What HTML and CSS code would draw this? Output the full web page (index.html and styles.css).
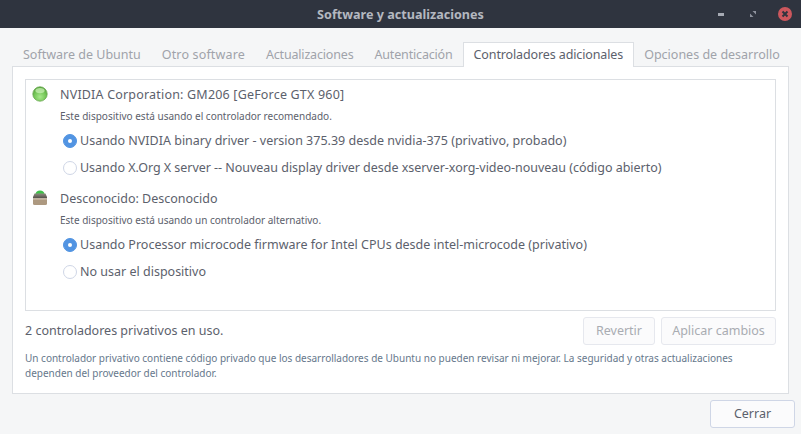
FILE: index.html
```html
<!DOCTYPE html>
<html lang="es">
<head>
<meta charset="utf-8">
<title>Software y actualizaciones</title>
<link rel="stylesheet" href="styles.css">
</head>
<body>
<div class="window">
  <header class="titlebar">
    <span class="title">Software y actualizaciones</span>
    <div class="controls">
      <svg class="ctl-min" width="6" height="3" viewBox="0 0 6 3"><rect x="0" y="0" width="6" height="3" fill="#a6aab3"/></svg>
      <svg class="ctl-max" width="6" height="6" viewBox="0 0 6 6"><path d="M2.5 0H6V3.5ZM0 2.5V6H3.5Z" fill="#8f939e"/></svg>
      <svg class="ctl-close" width="14" height="14" viewBox="0 0 14 14"><circle cx="7" cy="7" r="7" fill="#cc575d"/><path d="M4.5 4.5L9.5 9.5M9.5 4.5L4.5 9.5" stroke="#2f343f" stroke-width="2"/></svg>
    </div>
  </header>
  <main class="content">
    <nav class="tabs">
      <span class="tab">Software de Ubuntu</span>
      <span class="tab tab-otro">Otro software</span>
      <span class="tab tab-tight">Actualizaciones</span>
      <span class="tab tab-tight">Autenticación</span>
      <span class="tab active tab-ctrl">Controladores adicionales</span>
      <span class="tab">Opciones de desarrollo</span>
    </nav>
    <section class="panel">
      <div class="list">
        <div class="device">
          <div class="device-head">
            <svg class="dev-icon" width="16" height="16" viewBox="0 0 16 16">
              <defs><radialGradient id="g" cx="50%" cy="70%" r="60%"><stop offset="0" stop-color="#a6e88a"/><stop offset="0.7" stop-color="#72c455"/><stop offset="1" stop-color="#5aa83f"/></radialGradient></defs>
              <circle cx="8" cy="8" r="7.2" fill="url(#g)" stroke="#6aa850" stroke-width="0.8"/>
              <ellipse cx="8" cy="4.6" rx="4.6" ry="2.6" fill="#c8efb4" opacity="0.75"/>
            </svg>
            <span class="dev-name wide">NVIDIA Corporation: GM206 [GeForce GTX 960]</span>
          </div>
          <p class="dev-note">Este dispositivo está usando el controlador recomendado.</p>
          <label class="option"><span class="radio on"></span>Usando NVIDIA binary driver - version 375.39 desde nvidia-375 (privativo, probado)</label>
          <label class="option"><span class="radio"></span><span class="opt-tight">Usando X.Org X server -- Nouveau display driver desde xserver-xorg-video-nouveau (código abierto)</span></label>
        </div>
        <div class="device">
          <div class="device-head">
            <svg class="dev-icon" width="16" height="16" viewBox="0 0 16 16">
              <defs><linearGradient id="lid" x1="0" y1="0" x2="0" y2="1"><stop offset="0" stop-color="#8e8b80"/><stop offset="1" stop-color="#4f4c45"/></linearGradient></defs>
              <path d="M3.5 4Q4 0.5 8 0.5T12.5 4Z" fill="#3fc04a"/>
              <path d="M2.5 3.5H13.5L15 7V8.5H1V7Z" fill="url(#lid)"/>
              <path d="M1 8.5H15V13.5Q15 15 13.5 15H2.5Q1 15 1 13.5Z" fill="#ad9980"/>
              <rect x="1" y="8.5" width="14" height="1" fill="#d3c7b4"/>
            </svg>
            <span class="dev-name">Desconocido: Desconocido</span>
          </div>
          <p class="dev-note">Este dispositivo está usando un controlador alternativo.</p>
          <label class="option"><span class="radio on"></span>Usando Processor microcode firmware for Intel CPUs desde intel-microcode (privativo)</label>
          <label class="option"><span class="radio"></span>No usar el dispositivo</label>
        </div>
      </div>
      <div class="status-row">
        <span class="status">2 controladores privativos en uso.</span>
        <div class="actions">
          <button class="btn disabled revert" disabled>Revertir</button>
          <button class="btn disabled apply" disabled>Aplicar cambios</button>
        </div>
      </div>
      <p class="footnote">Un controlador privativo contiene código privado que los desarrolladores de Ubuntu no pueden revisar ni mejorar. La seguridad y otras actualizaciones dependen del proveedor del controlador.</p>
    </section>
    <div class="bottom"><button class="btn close">Cerrar</button></div>
  </main>
</div>
</body>
</html>
```
FILE: styles.css
```css
* { box-sizing: border-box; }
html, body { margin: 0; padding: 0; }
body { width: 801px; height: 434px; overflow: hidden; font-family: "Noto Sans", sans-serif; font-size: 12.5px; color: #5c616c; background: #f5f6f7; }
.window { display: flex; flex-direction: column; height: 434px; }
.titlebar { height: 28px; flex: none; background: #2f343f; display: flex; align-items: center; justify-content: center; position: relative; }
.title { font-weight: 700; font-size: 12.6px; color: #b4b8c0; }
.controls { position: absolute; right: 9px; top: 7px; display: flex; align-items: center; height: 14px; }
.ctl-min { margin-right: 26px; }
.ctl-max { margin-right: 22px; }
.content { flex: 1; padding: 14px 6px 0 12px; display: flex; flex-direction: column; }
.tabs { display: flex; height: 25px; padding-left: 0.5px; position: relative; z-index: 1; margin-bottom: -1px; }
.tab { padding: 0 9.5px; height: 25px; line-height: 23px; color: #a0a3aa; border: 1px solid transparent; border-bottom: none; white-space: nowrap; }
.tab-otro { letter-spacing: 0.15px; }
.tab-tight { letter-spacing: -0.17px; }
.tab-ctrl { letter-spacing: -0.12px; }
.tab.active { color: #5c616c; background: #fff; border-color: #dcdfe3; }
.panel { height: 328px; width: 777px; flex: none; background: #fff; border: 1px solid #dcdfe3; padding: 12px 12px 0 12px; display: flex; flex-direction: column; }
.list { height: 232px; flex: none; border: 1px solid #dcdfe3; padding: 5px 0 0 6px; }
.device { margin-bottom: 8px; }
.device-head { display: flex; align-items: center; height: 18px; }
.dev-icon { flex: none; }
.dev-name { margin-left: 12px; }
.wide { letter-spacing: 0.19px; }
.dev-note { margin: 6px 0 0 28px; font-size: 10px; line-height: 14px; }
.option { display: flex; align-items: center; height: 27px; margin-left: 31px; white-space: nowrap; }
.opt-tight { letter-spacing: -0.03px; }
.device .dev-note + .option { margin-top: 4px; }
.radio { width: 14px; height: 14px; border-radius: 50%; border: 1px solid #cfd6e6; background: #fff; margin-right: 3px; flex: none; }
.radio.on { background: #5294e2; border-color: #5294e2; position: relative; }
.radio.on::after { content: ""; position: absolute; left: 4px; top: 4px; width: 4px; height: 4px; border-radius: 50%; background: #fff; }
.status-row { display: flex; align-items: center; justify-content: space-between; margin-top: 6px; height: 28px; }
.status { padding-bottom: 2px; }
.actions { display: flex; gap: 6px; }
.btn { height: 28px; border-radius: 3px; border: 1px solid #cfd6e6; background: #fbfbfc; font-family: inherit; font-size: 12.5px; color: #5c616c; padding: 0 0 2px; }
.btn.disabled { border-color: #e6e8ee; color: #a9acb2; background: #fbfbfc; }
.revert { width: 72px; }
.apply { width: 115px; }
.footnote { margin: 6px 0 0 0; font-size: 10px; line-height: 15px; color: #66788c; }
.bottom { display: flex; justify-content: flex-end; margin-top: 6px; }
.close { width: 85px; }
```
